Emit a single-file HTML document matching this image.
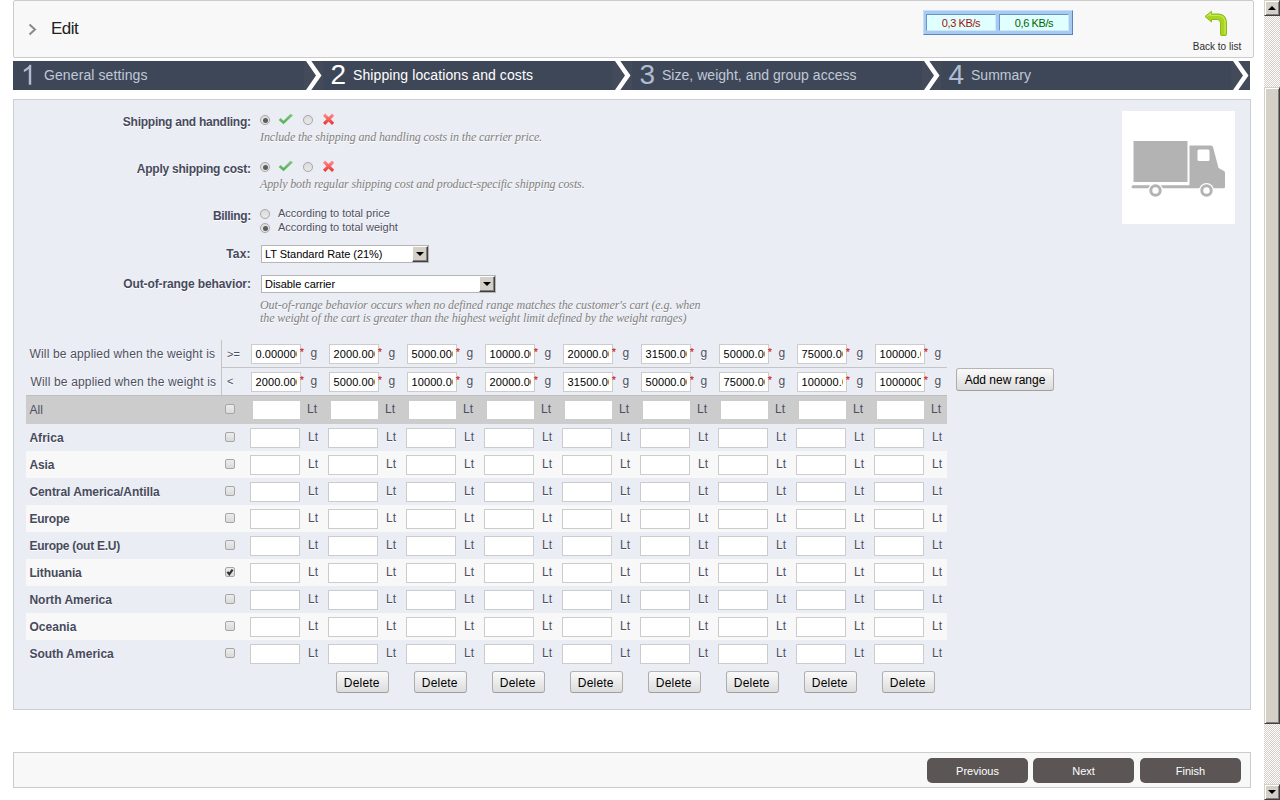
<!DOCTYPE html>
<html><head><meta charset="utf-8"><title>Carrier wizard</title>
<style>
html,body{margin:0;padding:0;}
body{width:1280px;height:800px;overflow:hidden;background:#fff;position:relative;font-family:"Liberation Sans",sans-serif;font-size:12px;color:#585a69;}
div,span,svg{position:absolute;white-space:nowrap;box-sizing:border-box;}
.sh{text-shadow:0 1px 0 #fff;}
.hint{font-family:"Liberation Serif",serif;font-style:italic;color:#7f7f7f;text-shadow:0 1px 0 #fff;}
.inp{background:#fff;border:1px solid #ccc;width:50px;height:20px;overflow:hidden;}
.inp b{position:absolute;left:3.5px;top:0;font-weight:normal;font-size:11px;line-height:19px;color:#000;letter-spacing:0.1px;}
.inp u{position:absolute;right:0;top:0;width:3px;height:18px;background:#fff;}
.cb{width:10px;height:10px;border:1px solid #a6a6a6;border-radius:2px;background:linear-gradient(#ececec,#dadada);}
.rd{width:10px;height:10px;border:1px solid #a9a9a9;border-radius:50%;background:linear-gradient(#dcdcdc,#e9e9e9);box-shadow:0 0 1px rgba(0,0,0,.12);}
.rd.on::after{content:"";position:absolute;left:1.5px;top:1.5px;width:5px;height:5px;border-radius:50%;background:#5c5c5c;}
.btn{border:1px solid;border-color:#b4b4b4 #adadad #9f9f9f;border-radius:3px;background:linear-gradient(#fafafa,#dcdcdc);color:#000;font-size:12px;text-align:center;}
.dk{background:#5b5655;border-radius:5px;color:#fff;font-size:11px;text-align:center;width:101px;height:25px;line-height:26px;top:758px;}
.sel{background:#fff;border:1px solid #b5b5b5;height:18px;}
.sel i{box-sizing:border-box;position:absolute;right:0;top:0;width:16px;height:16px;background:#d4d0c8;border:1px solid;border-color:#fff #404040 #404040 #fff;box-shadow:inset -1px -1px 0 #808080;}
.sel i::after{content:"";position:absolute;left:2.5px;top:5px;border:4px solid transparent;border-top:4px solid #000;border-bottom:0;}
</style></head><body>
<div style="left:13px;top:0;width:1241px;height:58px;background:#f8f8f8;border:1px solid #ccc;border-radius:2px;"></div>
<svg style="left:26.5px;top:22px" width="12" height="15" viewBox="0 0 12 15"><path d="M2.5 2.5 L8 7.5 L2.5 12.5" fill="none" stroke="#8a8a8a" stroke-width="2"/></svg>
<div style="left:51px;top:16.0px;font-size:17px;line-height:26px;color:#222;letter-spacing:-0.55px;">Edit</div>
<div style="left:922.5px;top:10px;width:150.5px;height:25px;background:#a6caf0;border:1px solid;border-color:#c4e0fb #5b84c4 #5b84c4 #c4e0fb;"></div>
<div style="left:926px;top:14px;width:70px;height:17px;background:#e0ffff;border:1px solid;border-color:#6b93c9 #cfe6fb #cfe6fb #6b93c9;"></div>
<div style="left:999px;top:14px;width:70px;height:17px;background:#e0ffff;border:1px solid;border-color:#6b93c9 #cfe6fb #cfe6fb #6b93c9;"></div>
<div style="left:926px;top:15.0px;font-size:11px;line-height:16px;color:#a01408;width:70px;text-align:center;letter-spacing:-0.4px;">0,3 KB/s</div>
<div style="left:999px;top:15.0px;font-size:11px;line-height:16px;color:#006400;width:70px;text-align:center;letter-spacing:-0.4px;">0,6 KB/s</div>
<svg style="left:1203px;top:9px" width="26" height="28" viewBox="0 0 26 28">
<defs><linearGradient id="ag" x1="0" y1="0" x2="1" y2="0"><stop offset="0" stop-color="#9fd016"/><stop offset="0.5" stop-color="#c3e857"/><stop offset="1" stop-color="#94c511"/></linearGradient></defs>
<path d="M2 7.5 L8.5 2.3 L8.5 5 L15 5 Q23.5 5 23.5 14 L23.5 25.5 Q23.5 26.5 22.5 26.5 L18.5 26.5 Q17.5 26.5 17.5 25.5 L17.5 14 Q17.5 10.5 14 10.5 L8.5 10.5 L8.5 13 Z" fill="#a8d422" stroke="#8cbc14" stroke-width="1"/>
<path d="M4 7.5 L7.5 4.5 L7.5 6.5 L15 6.5 Q22 6.5 22 14 L22 25" fill="none" stroke="#cdee6a" stroke-width="1.2" opacity="0.8"/>
</svg>
<div style="left:1167px;top:38.5px;font-size:10px;line-height:15px;color:#2d2d2d;width:100px;text-align:center;">Back to list</div>
<div style="left:13px;top:61px;width:1237px;height:29px;background:#3e4757;"></div>
<svg style="left:13px;top:61px" width="40" height="29" viewBox="0 0 40 29"><path transform="translate(7.8 23.8) scale(0.01367 -0.01367)" d="M763 0H583V1147Q518 1085 412.5 1023Q307 961 223 930V1104Q374 1175 487 1276Q600 1377 647 1472H763Z" fill="#b0bcd0"/></svg>
<div style="left:44px;top:64.5px;font-size:14px;line-height:21px;color:#c0c9d8;letter-spacing:0.097px;">General settings</div>
<div style="left:303.7px;top:61px;width:19.3px;height:29px;background:#434b5b;"></div>
<svg style="left:306.1px;top:61px" width="16" height="29" viewBox="0 0 16 29"><path d="M0 0 L5.3 0 L15.5 14.5 L5.3 29 L0 29 L10 14.5 Z" fill="#fff"/></svg>
<div style="left:330.5px;top:60.0px;font-size:28px;line-height:30px;color:#fff;">2</div>
<div style="left:353px;top:64.5px;font-size:14px;line-height:21px;color:#fff;letter-spacing:0.091px;">Shipping locations and costs</div>
<div style="left:612.7px;top:61px;width:19.3px;height:29px;background:#434b5b;"></div>
<svg style="left:615.1px;top:61px" width="16" height="29" viewBox="0 0 16 29"><path d="M0 0 L5.3 0 L15.5 14.5 L5.3 29 L0 29 L10 14.5 Z" fill="#fff"/></svg>
<div style="left:639.5px;top:60.0px;font-size:28px;line-height:30px;color:#b0bcd0;">3</div>
<div style="left:662px;top:64.5px;font-size:14px;line-height:21px;color:#c0c9d8;letter-spacing:0.027px;">Size, weight, and group access</div>
<div style="left:921.7px;top:61px;width:19.3px;height:29px;background:#434b5b;"></div>
<svg style="left:924.1px;top:61px" width="16" height="29" viewBox="0 0 16 29"><path d="M0 0 L5.3 0 L15.5 14.5 L5.3 29 L0 29 L10 14.5 Z" fill="#fff"/></svg>
<div style="left:948.5px;top:60.0px;font-size:28px;line-height:30px;color:#b0bcd0;">4</div>
<div style="left:971px;top:64.5px;font-size:14px;line-height:21px;color:#c0c9d8;letter-spacing:0.013px;">Summary</div>
<div style="left:1230.7px;top:61px;width:19.3px;height:29px;background:#434b5b;"></div>
<svg style="left:1233.1px;top:61px" width="16" height="29" viewBox="0 0 16 29"><path d="M0 0 L5.3 0 L15.5 14.5 L5.3 29 L0 29 L10 14.5 Z" fill="#fff"/></svg>
<div style="left:13px;top:99px;width:1238px;height:611px;background:#ebedf4;border:1px solid #ccced7;"></div>
<div style="left:1122px;top:111px;width:113px;height:113px;background:#fff;"></div>
<svg style="left:1122px;top:111px" width="113" height="113" viewBox="0 0 113 113">
<g fill="#b3b3b3">
<rect x="11.5" y="30" width="54" height="41"/>
<path d="M67.5 34.5 L89 34.5 Q90.5 34.5 91 36 L96.5 57 L102 60 Q103 60.5 103 62 L103 75.8 Q103 77.3 101.5 77.3 L11 77.3 Q9.5 77.3 9.5 75.8 Q9.5 74.3 11 74.3 L67.5 74.3 Z"/>
</g>
<rect x="75.500" y="38.5" width="12" height="11.500" rx="1.5" fill="#fff"/>
<circle cx="33.5" cy="79.500" r="7.500" fill="#fff"/><circle cx="84.500" cy="79.500" r="7.500" fill="#fff"/>
<circle cx="33.5" cy="79.500" r="4.700" fill="none" stroke="#b3b3b3" stroke-width="3"/>
<circle cx="84.500" cy="79.500" r="4.700" fill="none" stroke="#b3b3b3" stroke-width="3"/>
</svg>
<svg width="0" height="0" style="left:0;top:0"><defs><linearGradient id="gck" x1="0" y1="0" x2="0" y2="1"><stop offset="0" stop-color="#7ccb7c"/><stop offset="1" stop-color="#4cae4c"/></linearGradient><linearGradient id="gcr" gradientUnits="userSpaceOnUse" x1="0" y1="2" x2="0" y2="12"><stop offset="0" stop-color="#ff8f8f"/><stop offset="1" stop-color="#f03434"/></linearGradient></defs></svg>
<div class="sh" style="left:122.8px;top:113.0px;font-size:12px;line-height:18px;color:#474a5c;font-weight:bold;letter-spacing:-0.241px;">Shipping and handling:</div>
<div class="rd on" style="left:260px;top:115px"></div>
<svg style="left:278px;top:112px" width="16" height="14" viewBox="0 0 16 14"><path d="M0.900 7.950 L2.700 6.200 L5.500 9 L12.500 2 L14.600 3.400 L5.500 12 Z" fill="url(#gck)" stroke="#4fae4f" stroke-width="0.500" stroke-opacity="0.600"/></svg>
<div class="rd" style="left:303px;top:115px"></div>
<svg style="left:322px;top:111.5px" width="14" height="14" viewBox="0 0 14 14"><path d="M2.100 2.700 L11.100 11.900 M11.100 2.700 L2.100 11.900" fill="none" stroke="url(#gcr)" stroke-width="3.100"/></svg>
<div class="hint" style="left:260px;top:128.0px;font-size:12px;line-height:18px;color:#7f7f7f;letter-spacing:-0.120px;">Include the shipping and handling costs in the carrier price.</div>
<div class="sh" style="left:136.8px;top:160.0px;font-size:12px;line-height:18px;color:#474a5c;font-weight:bold;letter-spacing:-0.234px;">Apply shipping cost:</div>
<div class="rd on" style="left:260px;top:162px"></div>
<svg style="left:278px;top:159px" width="16" height="14" viewBox="0 0 16 14"><path d="M0.900 7.950 L2.700 6.200 L5.500 9 L12.500 2 L14.600 3.400 L5.500 12 Z" fill="url(#gck)" stroke="#4fae4f" stroke-width="0.500" stroke-opacity="0.600"/></svg>
<div class="rd" style="left:303px;top:162px"></div>
<svg style="left:322px;top:158.5px" width="14" height="14" viewBox="0 0 14 14"><path d="M2.100 2.700 L11.100 11.900 M11.100 2.700 L2.100 11.900" fill="none" stroke="url(#gcr)" stroke-width="3.100"/></svg>
<div class="hint" style="left:260px;top:175.0px;font-size:12px;line-height:18px;color:#7f7f7f;letter-spacing:-0.129px;">Apply both regular shipping cost and product-specific shipping costs.</div>
<div class="sh" style="left:213.05px;top:207.0px;font-size:12px;line-height:18px;color:#474a5c;font-weight:bold;letter-spacing:-0.365px;">Billing:</div>
<div class="rd" style="left:260px;top:209px"></div>
<div class="rd on" style="left:260px;top:223px"></div>
<div class="sh" style="left:278px;top:205.0px;font-size:11px;line-height:16px;color:#4c4f61;">According to total price</div>
<div class="sh" style="left:278px;top:219.0px;font-size:11px;line-height:16px;color:#4c4f61;">According to total weight</div>
<div class="sh" style="left:226.20000000000002px;top:245.0px;font-size:12px;line-height:18px;color:#474a5c;font-weight:bold;letter-spacing:0.201px;">Tax:</div>
<div class="sel" style="left:261px;top:245px;width:168px;"><i></i></div>
<div style="left:265px;top:246.0px;font-size:11px;line-height:16px;color:#000;letter-spacing:-0.033px;">LT Standard Rate (21%)</div>
<div class="sh" style="left:123.3px;top:275.0px;font-size:12px;line-height:18px;color:#474a5c;font-weight:bold;letter-spacing:-0.114px;">Out-of-range behavior:</div>
<div class="sel" style="left:261px;top:275px;width:235px;"><i></i></div>
<div style="left:265px;top:276.0px;font-size:11px;line-height:16px;color:#000;letter-spacing:-0.061px;">Disable carrier</div>
<div class="hint" style="left:260px;top:296.0px;font-size:12px;line-height:18px;color:#7f7f7f;letter-spacing:-0.060px;">Out-of-range behavior occurs when no defined range matches the customer's cart (e.g. when</div>
<div class="hint" style="left:260px;top:309.0px;font-size:12px;line-height:18px;color:#7f7f7f;letter-spacing:-0.097px;">the weight of the cart is greater than the highest weight limit defined by the weight ranges)</div>
<div style="left:221px;top:340px;width:1px;height:55px;background:#c4c4c4;"></div>
<div style="left:221px;top:367px;width:726px;height:1px;background:#c4c4c4;"></div>
<div class="sh" style="left:29.5px;top:345.0px;font-size:12px;line-height:18px;color:#4c4f61;letter-spacing:0.164px;">Will be applied when the weight is</div>
<div class="sh" style="left:30.5px;top:373.0px;font-size:12px;line-height:18px;color:#4c4f61;letter-spacing:0.164px;">Will be applied when the weight is</div>
<div class="sh" style="left:227px;top:345.5px;font-size:11px;line-height:16px;color:#4c4f61;">&gt;=</div>
<div class="sh" style="left:227px;top:373.0px;font-size:11px;line-height:16px;color:#4c4f61;">&lt;</div>
<div class="inp" style="left:251px;top:344px"><b>0.000000</b><u></u></div>
<div style="left:299.7px;top:343.5px;font-size:11px;line-height:16px;color:#cc0000;">*</div>
<div class="sh" style="left:310.5px;top:343.5px;font-size:12px;line-height:18px;color:#4c4f61;">g</div>
<div class="inp" style="left:251px;top:372px"><b>2000.000000</b><u></u></div>
<div style="left:299.7px;top:371.5px;font-size:11px;line-height:16px;color:#cc0000;">*</div>
<div class="sh" style="left:310.5px;top:371.5px;font-size:12px;line-height:18px;color:#4c4f61;">g</div>
<div class="inp" style="left:329px;top:344px"><b>2000.000000</b><u></u></div>
<div style="left:377.7px;top:343.5px;font-size:11px;line-height:16px;color:#cc0000;">*</div>
<div class="sh" style="left:388.5px;top:343.5px;font-size:12px;line-height:18px;color:#4c4f61;">g</div>
<div class="inp" style="left:329px;top:372px"><b>5000.000000</b><u></u></div>
<div style="left:377.7px;top:371.5px;font-size:11px;line-height:16px;color:#cc0000;">*</div>
<div class="sh" style="left:388.5px;top:371.5px;font-size:12px;line-height:18px;color:#4c4f61;">g</div>
<div class="inp" style="left:407px;top:344px"><b>5000.000000</b><u></u></div>
<div style="left:455.7px;top:343.5px;font-size:11px;line-height:16px;color:#cc0000;">*</div>
<div class="sh" style="left:466.5px;top:343.5px;font-size:12px;line-height:18px;color:#4c4f61;">g</div>
<div class="inp" style="left:407px;top:372px"><b>10000.000000</b><u></u></div>
<div style="left:455.7px;top:371.5px;font-size:11px;line-height:16px;color:#cc0000;">*</div>
<div class="sh" style="left:466.5px;top:371.5px;font-size:12px;line-height:18px;color:#4c4f61;">g</div>
<div class="inp" style="left:485px;top:344px"><b>10000.000000</b><u></u></div>
<div style="left:533.7px;top:343.5px;font-size:11px;line-height:16px;color:#cc0000;">*</div>
<div class="sh" style="left:544.5px;top:343.5px;font-size:12px;line-height:18px;color:#4c4f61;">g</div>
<div class="inp" style="left:485px;top:372px"><b>20000.000000</b><u></u></div>
<div style="left:533.7px;top:371.5px;font-size:11px;line-height:16px;color:#cc0000;">*</div>
<div class="sh" style="left:544.5px;top:371.5px;font-size:12px;line-height:18px;color:#4c4f61;">g</div>
<div class="inp" style="left:563px;top:344px"><b>20000.000000</b><u></u></div>
<div style="left:611.7px;top:343.5px;font-size:11px;line-height:16px;color:#cc0000;">*</div>
<div class="sh" style="left:622.5px;top:343.5px;font-size:12px;line-height:18px;color:#4c4f61;">g</div>
<div class="inp" style="left:563px;top:372px"><b>31500.000000</b><u></u></div>
<div style="left:611.7px;top:371.5px;font-size:11px;line-height:16px;color:#cc0000;">*</div>
<div class="sh" style="left:622.5px;top:371.5px;font-size:12px;line-height:18px;color:#4c4f61;">g</div>
<div class="inp" style="left:641px;top:344px"><b>31500.000000</b><u></u></div>
<div style="left:689.7px;top:343.5px;font-size:11px;line-height:16px;color:#cc0000;">*</div>
<div class="sh" style="left:700.5px;top:343.5px;font-size:12px;line-height:18px;color:#4c4f61;">g</div>
<div class="inp" style="left:641px;top:372px"><b>50000.000000</b><u></u></div>
<div style="left:689.7px;top:371.5px;font-size:11px;line-height:16px;color:#cc0000;">*</div>
<div class="sh" style="left:700.5px;top:371.5px;font-size:12px;line-height:18px;color:#4c4f61;">g</div>
<div class="inp" style="left:719px;top:344px"><b>50000.000000</b><u></u></div>
<div style="left:767.7px;top:343.5px;font-size:11px;line-height:16px;color:#cc0000;">*</div>
<div class="sh" style="left:778.5px;top:343.5px;font-size:12px;line-height:18px;color:#4c4f61;">g</div>
<div class="inp" style="left:719px;top:372px"><b>75000.000000</b><u></u></div>
<div style="left:767.7px;top:371.5px;font-size:11px;line-height:16px;color:#cc0000;">*</div>
<div class="sh" style="left:778.5px;top:371.5px;font-size:12px;line-height:18px;color:#4c4f61;">g</div>
<div class="inp" style="left:797px;top:344px"><b>75000.000000</b><u></u></div>
<div style="left:845.7px;top:343.5px;font-size:11px;line-height:16px;color:#cc0000;">*</div>
<div class="sh" style="left:856.5px;top:343.5px;font-size:12px;line-height:18px;color:#4c4f61;">g</div>
<div class="inp" style="left:797px;top:372px"><b>100000.000000</b><u></u></div>
<div style="left:845.7px;top:371.5px;font-size:11px;line-height:16px;color:#cc0000;">*</div>
<div class="sh" style="left:856.5px;top:371.5px;font-size:12px;line-height:18px;color:#4c4f61;">g</div>
<div class="inp" style="left:875px;top:344px"><b>100000.000000</b><u></u></div>
<div style="left:923.7px;top:343.5px;font-size:11px;line-height:16px;color:#cc0000;">*</div>
<div class="sh" style="left:934.5px;top:343.5px;font-size:12px;line-height:18px;color:#4c4f61;">g</div>
<div class="inp" style="left:875px;top:372px"><b>1000000.000000</b><u></u></div>
<div style="left:923.7px;top:371.5px;font-size:11px;line-height:16px;color:#cc0000;">*</div>
<div class="sh" style="left:934.5px;top:371.5px;font-size:12px;line-height:18px;color:#4c4f61;">g</div>
<div style="left:26px;top:395px;width:921px;height:29px;background:#ccc;border-top:1px solid #bebebe;"></div>
<div style="left:29.6px;top:401.0px;font-size:12px;line-height:18px;color:#4c4f61;">All</div>
<div class="cb" style="left:225px;top:404px"></div>
<div style="left:253px;top:401px;width:47px;height:18px;background:#fff;"></div>
<div style="left:307px;top:400.0px;font-size:12px;line-height:18px;color:#4c4f61;">Lt</div>
<div style="left:331px;top:401px;width:47px;height:18px;background:#fff;"></div>
<div style="left:385px;top:400.0px;font-size:12px;line-height:18px;color:#4c4f61;">Lt</div>
<div style="left:409px;top:401px;width:47px;height:18px;background:#fff;"></div>
<div style="left:463px;top:400.0px;font-size:12px;line-height:18px;color:#4c4f61;">Lt</div>
<div style="left:487px;top:401px;width:47px;height:18px;background:#fff;"></div>
<div style="left:541px;top:400.0px;font-size:12px;line-height:18px;color:#4c4f61;">Lt</div>
<div style="left:565px;top:401px;width:47px;height:18px;background:#fff;"></div>
<div style="left:619px;top:400.0px;font-size:12px;line-height:18px;color:#4c4f61;">Lt</div>
<div style="left:643px;top:401px;width:47px;height:18px;background:#fff;"></div>
<div style="left:697px;top:400.0px;font-size:12px;line-height:18px;color:#4c4f61;">Lt</div>
<div style="left:721px;top:401px;width:47px;height:18px;background:#fff;"></div>
<div style="left:775px;top:400.0px;font-size:12px;line-height:18px;color:#4c4f61;">Lt</div>
<div style="left:799px;top:401px;width:47px;height:18px;background:#fff;"></div>
<div style="left:853px;top:400.0px;font-size:12px;line-height:18px;color:#4c4f61;">Lt</div>
<div style="left:877px;top:401px;width:47px;height:18px;background:#fff;"></div>
<div style="left:931px;top:400.0px;font-size:12px;line-height:18px;color:#4c4f61;">Lt</div>
<div class="sh" style="left:29.4px;top:429.0px;font-size:12px;line-height:18px;color:#474a5c;font-weight:bold;letter-spacing:0.047px;">Africa</div>
<div class="cb" style="left:225px;top:432px"></div>
<div class="inp" style="left:250px;top:428px"></div>
<div class="sh" style="left:308px;top:428.0px;font-size:12px;line-height:18px;color:#4c4f61;">Lt</div>
<div class="inp" style="left:328px;top:428px"></div>
<div class="sh" style="left:386px;top:428.0px;font-size:12px;line-height:18px;color:#4c4f61;">Lt</div>
<div class="inp" style="left:406px;top:428px"></div>
<div class="sh" style="left:464px;top:428.0px;font-size:12px;line-height:18px;color:#4c4f61;">Lt</div>
<div class="inp" style="left:484px;top:428px"></div>
<div class="sh" style="left:542px;top:428.0px;font-size:12px;line-height:18px;color:#4c4f61;">Lt</div>
<div class="inp" style="left:562px;top:428px"></div>
<div class="sh" style="left:620px;top:428.0px;font-size:12px;line-height:18px;color:#4c4f61;">Lt</div>
<div class="inp" style="left:640px;top:428px"></div>
<div class="sh" style="left:698px;top:428.0px;font-size:12px;line-height:18px;color:#4c4f61;">Lt</div>
<div class="inp" style="left:718px;top:428px"></div>
<div class="sh" style="left:776px;top:428.0px;font-size:12px;line-height:18px;color:#4c4f61;">Lt</div>
<div class="inp" style="left:796px;top:428px"></div>
<div class="sh" style="left:854px;top:428.0px;font-size:12px;line-height:18px;color:#4c4f61;">Lt</div>
<div class="inp" style="left:874px;top:428px"></div>
<div class="sh" style="left:932px;top:428.0px;font-size:12px;line-height:18px;color:#4c4f61;">Lt</div>
<div style="left:26px;top:451px;width:921px;height:27px;background:#f8f8f8;"></div>
<div class="sh" style="left:29.4px;top:456.0px;font-size:12px;line-height:18px;color:#474a5c;font-weight:bold;letter-spacing:-0.065px;">Asia</div>
<div class="cb" style="left:225px;top:459px"></div>
<div class="inp" style="left:250px;top:455px"></div>
<div class="sh" style="left:308px;top:455.0px;font-size:12px;line-height:18px;color:#4c4f61;">Lt</div>
<div class="inp" style="left:328px;top:455px"></div>
<div class="sh" style="left:386px;top:455.0px;font-size:12px;line-height:18px;color:#4c4f61;">Lt</div>
<div class="inp" style="left:406px;top:455px"></div>
<div class="sh" style="left:464px;top:455.0px;font-size:12px;line-height:18px;color:#4c4f61;">Lt</div>
<div class="inp" style="left:484px;top:455px"></div>
<div class="sh" style="left:542px;top:455.0px;font-size:12px;line-height:18px;color:#4c4f61;">Lt</div>
<div class="inp" style="left:562px;top:455px"></div>
<div class="sh" style="left:620px;top:455.0px;font-size:12px;line-height:18px;color:#4c4f61;">Lt</div>
<div class="inp" style="left:640px;top:455px"></div>
<div class="sh" style="left:698px;top:455.0px;font-size:12px;line-height:18px;color:#4c4f61;">Lt</div>
<div class="inp" style="left:718px;top:455px"></div>
<div class="sh" style="left:776px;top:455.0px;font-size:12px;line-height:18px;color:#4c4f61;">Lt</div>
<div class="inp" style="left:796px;top:455px"></div>
<div class="sh" style="left:854px;top:455.0px;font-size:12px;line-height:18px;color:#4c4f61;">Lt</div>
<div class="inp" style="left:874px;top:455px"></div>
<div class="sh" style="left:932px;top:455.0px;font-size:12px;line-height:18px;color:#4c4f61;">Lt</div>
<div class="sh" style="left:29.4px;top:483.0px;font-size:12px;line-height:18px;color:#474a5c;font-weight:bold;letter-spacing:-0.061px;">Central America/Antilla</div>
<div class="cb" style="left:225px;top:486px"></div>
<div class="inp" style="left:250px;top:482px"></div>
<div class="sh" style="left:308px;top:482.0px;font-size:12px;line-height:18px;color:#4c4f61;">Lt</div>
<div class="inp" style="left:328px;top:482px"></div>
<div class="sh" style="left:386px;top:482.0px;font-size:12px;line-height:18px;color:#4c4f61;">Lt</div>
<div class="inp" style="left:406px;top:482px"></div>
<div class="sh" style="left:464px;top:482.0px;font-size:12px;line-height:18px;color:#4c4f61;">Lt</div>
<div class="inp" style="left:484px;top:482px"></div>
<div class="sh" style="left:542px;top:482.0px;font-size:12px;line-height:18px;color:#4c4f61;">Lt</div>
<div class="inp" style="left:562px;top:482px"></div>
<div class="sh" style="left:620px;top:482.0px;font-size:12px;line-height:18px;color:#4c4f61;">Lt</div>
<div class="inp" style="left:640px;top:482px"></div>
<div class="sh" style="left:698px;top:482.0px;font-size:12px;line-height:18px;color:#4c4f61;">Lt</div>
<div class="inp" style="left:718px;top:482px"></div>
<div class="sh" style="left:776px;top:482.0px;font-size:12px;line-height:18px;color:#4c4f61;">Lt</div>
<div class="inp" style="left:796px;top:482px"></div>
<div class="sh" style="left:854px;top:482.0px;font-size:12px;line-height:18px;color:#4c4f61;">Lt</div>
<div class="inp" style="left:874px;top:482px"></div>
<div class="sh" style="left:932px;top:482.0px;font-size:12px;line-height:18px;color:#4c4f61;">Lt</div>
<div style="left:26px;top:505px;width:921px;height:27px;background:#f8f8f8;"></div>
<div class="sh" style="left:29.4px;top:510.0px;font-size:12px;line-height:18px;color:#474a5c;font-weight:bold;letter-spacing:-0.207px;">Europe</div>
<div class="cb" style="left:225px;top:513px"></div>
<div class="inp" style="left:250px;top:509px"></div>
<div class="sh" style="left:308px;top:509.0px;font-size:12px;line-height:18px;color:#4c4f61;">Lt</div>
<div class="inp" style="left:328px;top:509px"></div>
<div class="sh" style="left:386px;top:509.0px;font-size:12px;line-height:18px;color:#4c4f61;">Lt</div>
<div class="inp" style="left:406px;top:509px"></div>
<div class="sh" style="left:464px;top:509.0px;font-size:12px;line-height:18px;color:#4c4f61;">Lt</div>
<div class="inp" style="left:484px;top:509px"></div>
<div class="sh" style="left:542px;top:509.0px;font-size:12px;line-height:18px;color:#4c4f61;">Lt</div>
<div class="inp" style="left:562px;top:509px"></div>
<div class="sh" style="left:620px;top:509.0px;font-size:12px;line-height:18px;color:#4c4f61;">Lt</div>
<div class="inp" style="left:640px;top:509px"></div>
<div class="sh" style="left:698px;top:509.0px;font-size:12px;line-height:18px;color:#4c4f61;">Lt</div>
<div class="inp" style="left:718px;top:509px"></div>
<div class="sh" style="left:776px;top:509.0px;font-size:12px;line-height:18px;color:#4c4f61;">Lt</div>
<div class="inp" style="left:796px;top:509px"></div>
<div class="sh" style="left:854px;top:509.0px;font-size:12px;line-height:18px;color:#4c4f61;">Lt</div>
<div class="inp" style="left:874px;top:509px"></div>
<div class="sh" style="left:932px;top:509.0px;font-size:12px;line-height:18px;color:#4c4f61;">Lt</div>
<div class="sh" style="left:29.4px;top:537.0px;font-size:12px;line-height:18px;color:#474a5c;font-weight:bold;letter-spacing:-0.254px;">Europe (out E.U)</div>
<div class="cb" style="left:225px;top:540px"></div>
<div class="inp" style="left:250px;top:536px"></div>
<div class="sh" style="left:308px;top:536.0px;font-size:12px;line-height:18px;color:#4c4f61;">Lt</div>
<div class="inp" style="left:328px;top:536px"></div>
<div class="sh" style="left:386px;top:536.0px;font-size:12px;line-height:18px;color:#4c4f61;">Lt</div>
<div class="inp" style="left:406px;top:536px"></div>
<div class="sh" style="left:464px;top:536.0px;font-size:12px;line-height:18px;color:#4c4f61;">Lt</div>
<div class="inp" style="left:484px;top:536px"></div>
<div class="sh" style="left:542px;top:536.0px;font-size:12px;line-height:18px;color:#4c4f61;">Lt</div>
<div class="inp" style="left:562px;top:536px"></div>
<div class="sh" style="left:620px;top:536.0px;font-size:12px;line-height:18px;color:#4c4f61;">Lt</div>
<div class="inp" style="left:640px;top:536px"></div>
<div class="sh" style="left:698px;top:536.0px;font-size:12px;line-height:18px;color:#4c4f61;">Lt</div>
<div class="inp" style="left:718px;top:536px"></div>
<div class="sh" style="left:776px;top:536.0px;font-size:12px;line-height:18px;color:#4c4f61;">Lt</div>
<div class="inp" style="left:796px;top:536px"></div>
<div class="sh" style="left:854px;top:536.0px;font-size:12px;line-height:18px;color:#4c4f61;">Lt</div>
<div class="inp" style="left:874px;top:536px"></div>
<div class="sh" style="left:932px;top:536.0px;font-size:12px;line-height:18px;color:#4c4f61;">Lt</div>
<div style="left:26px;top:559px;width:921px;height:27px;background:#f8f8f8;"></div>
<div class="sh" style="left:29.4px;top:564.0px;font-size:12px;line-height:18px;color:#474a5c;font-weight:bold;letter-spacing:-0.116px;">Lithuania</div>
<div class="cb" style="left:225px;top:567px"></div>
<svg style="left:226px;top:567px" width="9" height="9" viewBox="0 0 9 9"><path d="M1.400 4.900 L3.300 7.200 L6.600 2.600" fill="none" stroke="#333" stroke-width="2.200"/></svg>
<div class="inp" style="left:250px;top:563px"></div>
<div class="sh" style="left:308px;top:563.0px;font-size:12px;line-height:18px;color:#4c4f61;">Lt</div>
<div class="inp" style="left:328px;top:563px"></div>
<div class="sh" style="left:386px;top:563.0px;font-size:12px;line-height:18px;color:#4c4f61;">Lt</div>
<div class="inp" style="left:406px;top:563px"></div>
<div class="sh" style="left:464px;top:563.0px;font-size:12px;line-height:18px;color:#4c4f61;">Lt</div>
<div class="inp" style="left:484px;top:563px"></div>
<div class="sh" style="left:542px;top:563.0px;font-size:12px;line-height:18px;color:#4c4f61;">Lt</div>
<div class="inp" style="left:562px;top:563px"></div>
<div class="sh" style="left:620px;top:563.0px;font-size:12px;line-height:18px;color:#4c4f61;">Lt</div>
<div class="inp" style="left:640px;top:563px"></div>
<div class="sh" style="left:698px;top:563.0px;font-size:12px;line-height:18px;color:#4c4f61;">Lt</div>
<div class="inp" style="left:718px;top:563px"></div>
<div class="sh" style="left:776px;top:563.0px;font-size:12px;line-height:18px;color:#4c4f61;">Lt</div>
<div class="inp" style="left:796px;top:563px"></div>
<div class="sh" style="left:854px;top:563.0px;font-size:12px;line-height:18px;color:#4c4f61;">Lt</div>
<div class="inp" style="left:874px;top:563px"></div>
<div class="sh" style="left:932px;top:563.0px;font-size:12px;line-height:18px;color:#4c4f61;">Lt</div>
<div class="sh" style="left:29.4px;top:591.0px;font-size:12px;line-height:18px;color:#474a5c;font-weight:bold;letter-spacing:0.019px;">North America</div>
<div class="cb" style="left:225px;top:594px"></div>
<div class="inp" style="left:250px;top:590px"></div>
<div class="sh" style="left:308px;top:590.0px;font-size:12px;line-height:18px;color:#4c4f61;">Lt</div>
<div class="inp" style="left:328px;top:590px"></div>
<div class="sh" style="left:386px;top:590.0px;font-size:12px;line-height:18px;color:#4c4f61;">Lt</div>
<div class="inp" style="left:406px;top:590px"></div>
<div class="sh" style="left:464px;top:590.0px;font-size:12px;line-height:18px;color:#4c4f61;">Lt</div>
<div class="inp" style="left:484px;top:590px"></div>
<div class="sh" style="left:542px;top:590.0px;font-size:12px;line-height:18px;color:#4c4f61;">Lt</div>
<div class="inp" style="left:562px;top:590px"></div>
<div class="sh" style="left:620px;top:590.0px;font-size:12px;line-height:18px;color:#4c4f61;">Lt</div>
<div class="inp" style="left:640px;top:590px"></div>
<div class="sh" style="left:698px;top:590.0px;font-size:12px;line-height:18px;color:#4c4f61;">Lt</div>
<div class="inp" style="left:718px;top:590px"></div>
<div class="sh" style="left:776px;top:590.0px;font-size:12px;line-height:18px;color:#4c4f61;">Lt</div>
<div class="inp" style="left:796px;top:590px"></div>
<div class="sh" style="left:854px;top:590.0px;font-size:12px;line-height:18px;color:#4c4f61;">Lt</div>
<div class="inp" style="left:874px;top:590px"></div>
<div class="sh" style="left:932px;top:590.0px;font-size:12px;line-height:18px;color:#4c4f61;">Lt</div>
<div style="left:26px;top:613px;width:921px;height:27px;background:#f8f8f8;"></div>
<div class="sh" style="left:29.4px;top:618.0px;font-size:12px;line-height:18px;color:#474a5c;font-weight:bold;letter-spacing:0.042px;">Oceania</div>
<div class="cb" style="left:225px;top:621px"></div>
<div class="inp" style="left:250px;top:617px"></div>
<div class="sh" style="left:308px;top:617.0px;font-size:12px;line-height:18px;color:#4c4f61;">Lt</div>
<div class="inp" style="left:328px;top:617px"></div>
<div class="sh" style="left:386px;top:617.0px;font-size:12px;line-height:18px;color:#4c4f61;">Lt</div>
<div class="inp" style="left:406px;top:617px"></div>
<div class="sh" style="left:464px;top:617.0px;font-size:12px;line-height:18px;color:#4c4f61;">Lt</div>
<div class="inp" style="left:484px;top:617px"></div>
<div class="sh" style="left:542px;top:617.0px;font-size:12px;line-height:18px;color:#4c4f61;">Lt</div>
<div class="inp" style="left:562px;top:617px"></div>
<div class="sh" style="left:620px;top:617.0px;font-size:12px;line-height:18px;color:#4c4f61;">Lt</div>
<div class="inp" style="left:640px;top:617px"></div>
<div class="sh" style="left:698px;top:617.0px;font-size:12px;line-height:18px;color:#4c4f61;">Lt</div>
<div class="inp" style="left:718px;top:617px"></div>
<div class="sh" style="left:776px;top:617.0px;font-size:12px;line-height:18px;color:#4c4f61;">Lt</div>
<div class="inp" style="left:796px;top:617px"></div>
<div class="sh" style="left:854px;top:617.0px;font-size:12px;line-height:18px;color:#4c4f61;">Lt</div>
<div class="inp" style="left:874px;top:617px"></div>
<div class="sh" style="left:932px;top:617.0px;font-size:12px;line-height:18px;color:#4c4f61;">Lt</div>
<div class="sh" style="left:29.4px;top:645.0px;font-size:12px;line-height:18px;color:#474a5c;font-weight:bold;letter-spacing:0.012px;">South America</div>
<div class="cb" style="left:225px;top:648px"></div>
<div class="inp" style="left:250px;top:644px"></div>
<div class="sh" style="left:308px;top:644.0px;font-size:12px;line-height:18px;color:#4c4f61;">Lt</div>
<div class="inp" style="left:328px;top:644px"></div>
<div class="sh" style="left:386px;top:644.0px;font-size:12px;line-height:18px;color:#4c4f61;">Lt</div>
<div class="inp" style="left:406px;top:644px"></div>
<div class="sh" style="left:464px;top:644.0px;font-size:12px;line-height:18px;color:#4c4f61;">Lt</div>
<div class="inp" style="left:484px;top:644px"></div>
<div class="sh" style="left:542px;top:644.0px;font-size:12px;line-height:18px;color:#4c4f61;">Lt</div>
<div class="inp" style="left:562px;top:644px"></div>
<div class="sh" style="left:620px;top:644.0px;font-size:12px;line-height:18px;color:#4c4f61;">Lt</div>
<div class="inp" style="left:640px;top:644px"></div>
<div class="sh" style="left:698px;top:644.0px;font-size:12px;line-height:18px;color:#4c4f61;">Lt</div>
<div class="inp" style="left:718px;top:644px"></div>
<div class="sh" style="left:776px;top:644.0px;font-size:12px;line-height:18px;color:#4c4f61;">Lt</div>
<div class="inp" style="left:796px;top:644px"></div>
<div class="sh" style="left:854px;top:644.0px;font-size:12px;line-height:18px;color:#4c4f61;">Lt</div>
<div class="inp" style="left:874px;top:644px"></div>
<div class="sh" style="left:932px;top:644.0px;font-size:12px;line-height:18px;color:#4c4f61;">Lt</div>
<div class="btn" style="left:336px;top:671px;width:53px;height:22px;line-height:22px;letter-spacing:0.2px;padding-right:1.5px;">Delete</div>
<div class="btn" style="left:414px;top:671px;width:53px;height:22px;line-height:22px;letter-spacing:0.2px;padding-right:1.5px;">Delete</div>
<div class="btn" style="left:492px;top:671px;width:53px;height:22px;line-height:22px;letter-spacing:0.2px;padding-right:1.5px;">Delete</div>
<div class="btn" style="left:570px;top:671px;width:53px;height:22px;line-height:22px;letter-spacing:0.2px;padding-right:1.5px;">Delete</div>
<div class="btn" style="left:648px;top:671px;width:53px;height:22px;line-height:22px;letter-spacing:0.2px;padding-right:1.5px;">Delete</div>
<div class="btn" style="left:726px;top:671px;width:53px;height:22px;line-height:22px;letter-spacing:0.2px;padding-right:1.5px;">Delete</div>
<div class="btn" style="left:804px;top:671px;width:53px;height:22px;line-height:22px;letter-spacing:0.2px;padding-right:1.5px;">Delete</div>
<div class="btn" style="left:882px;top:671px;width:53px;height:22px;line-height:22px;letter-spacing:0.2px;padding-right:1.5px;">Delete</div>
<div class="btn" style="left:956px;top:368px;width:98px;height:22.5px;line-height:22.5px;">Add new range</div>
<div style="left:13px;top:752px;width:1238px;height:36px;background:#f8f8f8;border:1px solid #ccc;"></div>
<div class="dk" style="left:927px;">Previous</div>
<div class="dk" style="left:1033px;">Next</div>
<div class="dk" style="left:1140px;">Finish</div>
<div style="left:1264px;top:0;width:16px;height:800px;background-color:#fff;background-image:linear-gradient(45deg,#d4d0c8 25%,transparent 25%,transparent 75%,#d4d0c8 75%),linear-gradient(45deg,#d4d0c8 25%,transparent 25%,transparent 75%,#d4d0c8 75%);background-size:2px 2px;background-position:0 0,1px 1px;"></div>
<div style="left:1264px;top:0;width:16px;height:16px;background:#d4d0c8;border:1px solid;border-color:#d4d0c8 #404040 #404040 #d4d0c8;box-shadow:inset 1px 1px 0 #fff,inset -1px -1px 0 #808080;"></div>
<div style="left:1268px;top:6px;width:0;height:0;border:4px solid transparent;border-bottom:4px solid #000;border-top:0;"></div>
<div style="left:1264px;top:784px;width:16px;height:16px;background:#d4d0c8;border:1px solid;border-color:#d4d0c8 #404040 #404040 #d4d0c8;box-shadow:inset 1px 1px 0 #fff,inset -1px -1px 0 #808080;"></div>
<div style="left:1268px;top:790px;width:0;height:0;border:4px solid transparent;border-top:4px solid #000;border-bottom:0;"></div>
<div style="left:1264px;top:87px;width:16px;height:637px;background:#d4d0c8;border:1px solid;border-color:#d4d0c8 #404040 #404040 #d4d0c8;box-shadow:inset 1px 1px 0 #fff,inset -1px -1px 0 #808080;"></div>
</body></html>
